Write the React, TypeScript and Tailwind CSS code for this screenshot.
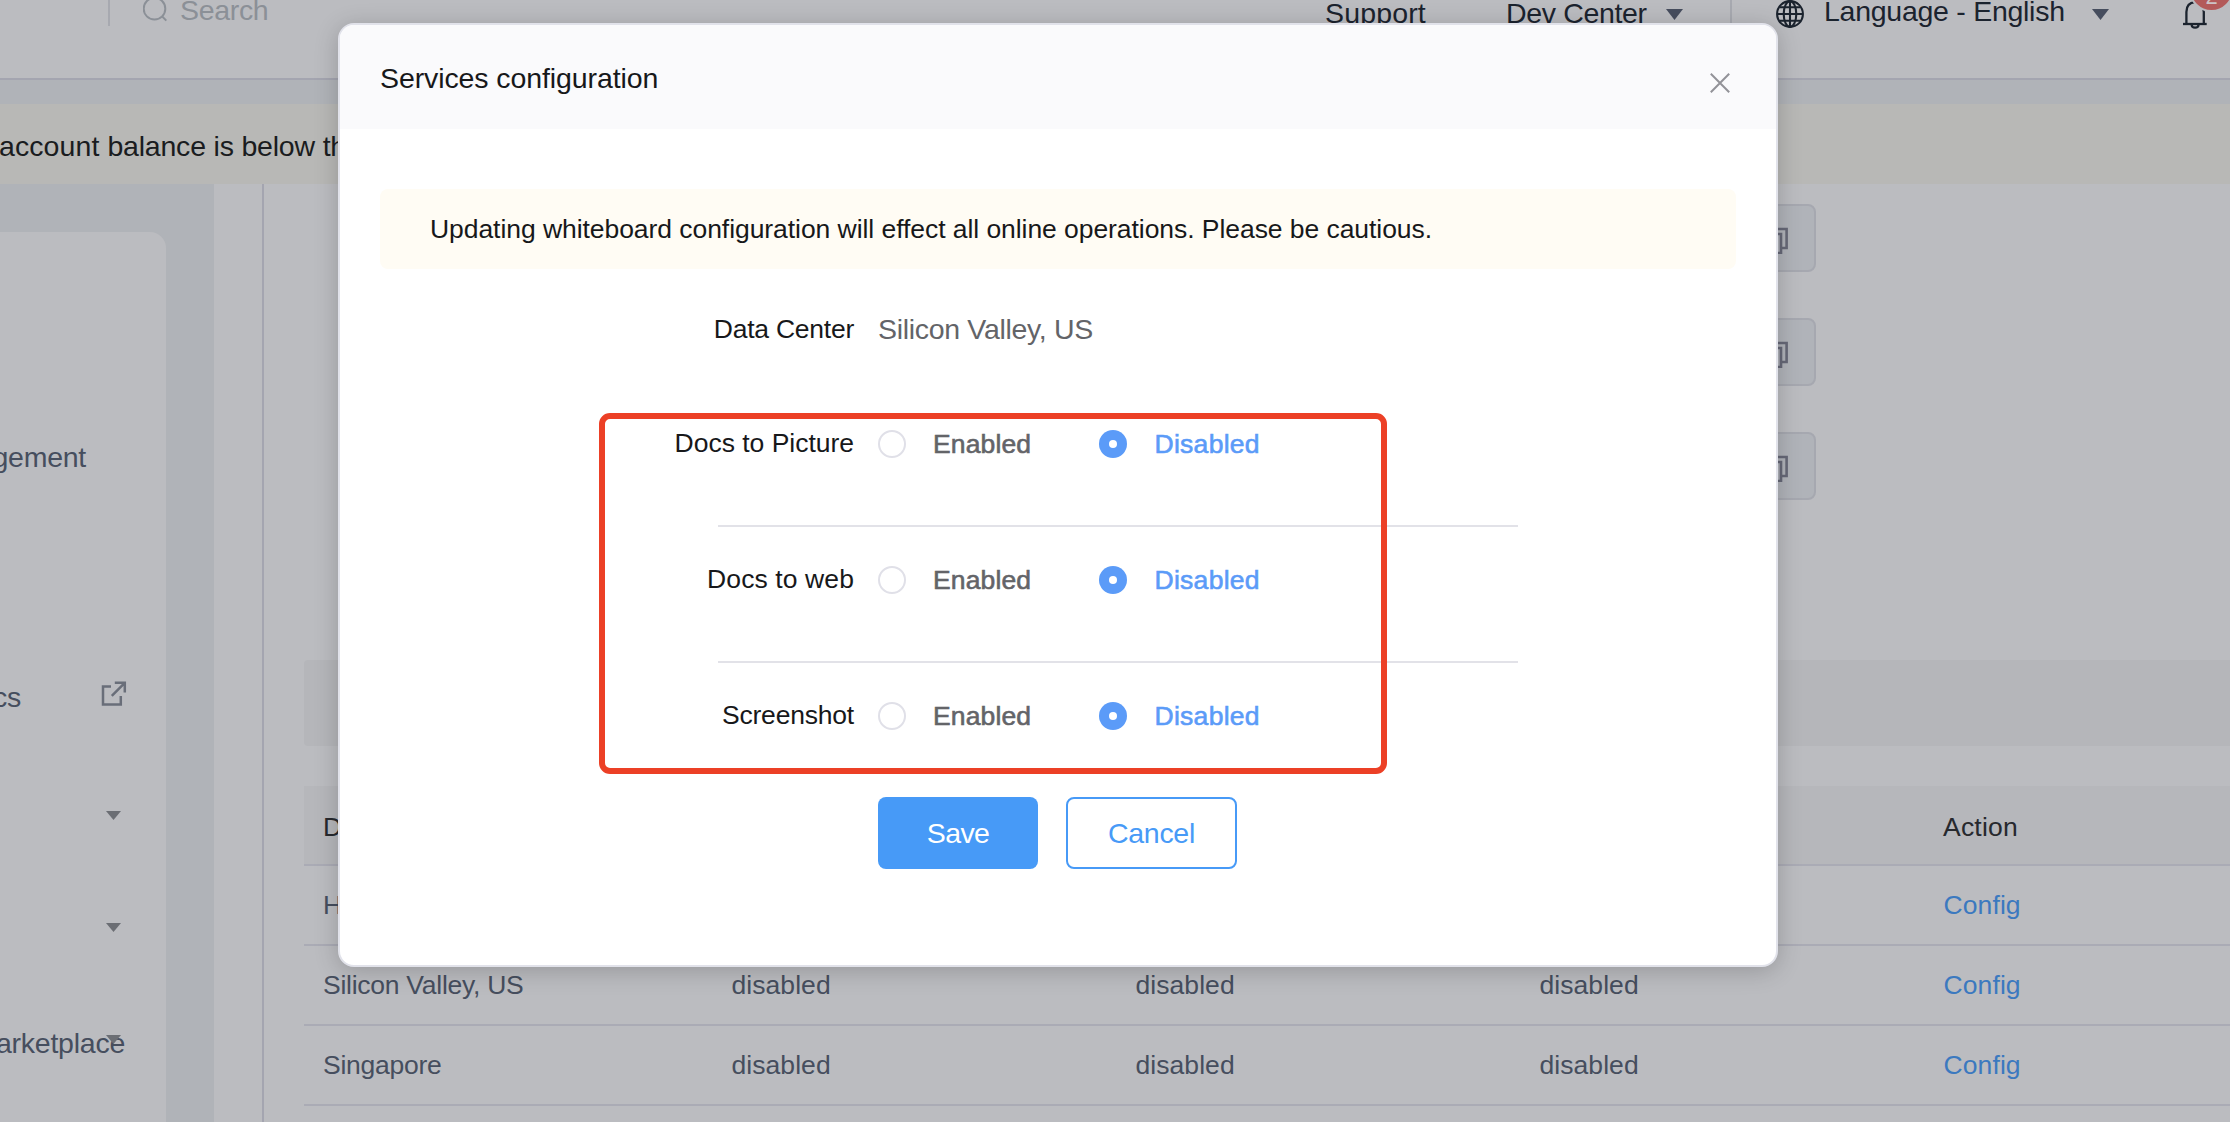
import type { ReactNode } from 'react';

function Caret({ className }: { className: string }) {
  return (
    <svg className={className} viewBox="0 0 16 10" preserveAspectRatio="none" fill="currentColor">
      <path d="M0 0H16L8 10Z" />
    </svg>
  );
}

function SearchIcon() {
  return (
    <svg className="h-[22px] w-[37px]" viewBox="143 0 37 22" fill="none" stroke="#8b9097" strokeWidth="2">
      <circle cx="154.5" cy="8.7" r="10.8" />
      <path d="M162 16.3L166.3 20.6" />
    </svg>
  );
}

function GlobeIcon() {
  return (
    <svg className="h-[28px] w-[47px]" viewBox="0 0 47 28" fill="none" stroke="#1b232e" strokeWidth="2.1">
      <circle cx="14" cy="14" r="12.9" />
      <ellipse cx="14" cy="14" rx="6.3" ry="12.9" />
      <path d="M14 1V27M1 14H27M3.5 7.3H24.5M3.5 20.7H24.5" />
    </svg>
  );
}

function Bell() {
  return (
    <div className="relative h-[30px] w-[47px] shrink-0">
      <svg className="h-[30px] w-[26px]" viewBox="0 0 26 30" fill="none" stroke="#1b232e" strokeWidth="2.3">
        <path d="M3.4 24V12C3.4 6 6.5 2.6 12 2.2C17.5 2.6 20.8 6 20.8 12V24" />
        <path d="M0 24H23.7" />
        <path d="M8.7 25C8.9 28.6 15.3 28.6 15.5 25" />
      </svg>
      <div className="absolute -top-[33px] left-[6px] flex h-[45px] w-[45px] items-end justify-center rounded-full border-2 border-[#bbbcc0] bg-[#b35a5a] text-[22px] leading-[26px] text-[#cdc3c6]">
        2
      </div>
    </div>
  );
}

function ExternalIcon() {
  return (
    <svg className="h-[26px] w-[26px]" viewBox="0 0 26 26" fill="none" stroke="#696e79" strokeWidth="2.5">
      <path d="M10 5.6H2V23.4H19.8V15" />
      <path d="M13.8 1.8H23.8V11.5M23.5 2.1L10.8 14.8" />
    </svg>
  );
}

function CopyButton() {
  return (
    <div className="h-[68px] w-[68px] rounded-lg border-2 border-[#a6a8b0] bg-[#b0b3b9] pt-[20px] pl-[12px]">
      <svg className="h-[28px] w-[26px]" viewBox="0 0 26 28" fill="none" stroke="#666877" strokeWidth="2.6">
        <path d="M7 7V3H24.6V22H19.5" />
        <path d="M2 8H19V27H2Z" />
      </svg>
    </div>
  );
}

function Header() {
  return (
    <header className="flex h-20 items-start border-b-2 border-[#a4a5b0] text-[28.5px] whitespace-nowrap text-[#1b232e]">
      <div className="mr-[33px] ml-[108px] h-[26px] w-[2px] bg-[#a7a9b0]" />
      <SearchIcon />
      <div className="flex-1 leading-[20px] tracking-[-0.33px] text-[#8b9097]">Search</div>
      <div className="w-[181px] leading-[27px] tracking-[0.16px]">Support</div>
      <div className="w-[160px] leading-[27px] tracking-[-0.34px]">Dev Center</div>
      <Caret className="mt-[9px] mr-[47px] h-[11px] w-[17px] text-[#464d5e]" />
      <div className="mr-[44px] h-[26px] w-[2px] bg-[#a7a9b0]" />
      <GlobeIcon />
      <div className="w-[269px] pl-px leading-[22px] tracking-[-0.27px]">Language - English</div>
      <Caret className="mt-[9px] mr-[74px] h-[11px] w-[17px] text-[#464d5e]" />
      <Bell />
    </header>
  );
}

function Sidebar() {
  return (
    <aside className="w-[214px] shrink-0 bg-[#b0b3b8] pt-12">
      <div className="flex h-full w-[166px] flex-col overflow-hidden rounded-tr-2xl bg-[#bbbcc0] text-[28.5px] leading-8 tracking-[-0.25px] text-[#464e5e]">
        <div className="mt-[209px] flex h-8 w-[86px] justify-end">gement</div>
        <div className="mt-[208px] flex h-8">
          <div className="flex w-[21px] justify-end">cs</div>
          <div className="ml-[80px]">
            <ExternalIcon />
          </div>
        </div>
        <div className="mt-[86px] flex h-8 items-center pl-[106px] text-[#6b6e74]">
          <Caret className="h-[9px] w-[15px]" />
        </div>
        <div className="mt-20 flex h-8 items-center pl-[106px] text-[#6b6e74]">
          <Caret className="h-[9px] w-[15px]" />
        </div>
        <div className="relative mt-20 h-8">
          <div className="flex w-[125px] justify-end pt-[4px]">arketplace</div>
          <Caret className="absolute top-[12px] left-[106px] h-[9px] w-[15px] text-[#6b6e74]" />
        </div>
      </div>
    </aside>
  );
}

const rows = [
  { name: 'Hangzhou, CN', value: '' },
  { name: 'Silicon Valley, US', value: 'disabled' },
  { name: 'Singapore', value: 'disabled' },
];

function Main() {
  return (
    <main className="ml-12 flex-1 border-l-2 border-[#a4a5b0] pt-5 pl-10">
      <div className="ml-[1444px] flex flex-col gap-[46px]">
        <CopyButton />
        <CopyButton />
        <CopyButton />
      </div>
      <div className="mt-[160px] h-[86px] rounded-l bg-[#b5b6ba]" />
      <div className="mt-10 text-[26.5px] whitespace-nowrap text-[#464e5e]">
        <div className="grid h-20 grid-cols-[408px_404px_404px_404px_1fr] items-center border-b-2 border-[#aaabb5] bg-[#b6b7bb] pt-1.5 text-[#27292e]">
          <div className="pl-[19px] tracking-[-0.25px]">Data Center</div>
          <div />
          <div />
          <div />
          <div className="pl-[19px] tracking-[0.2px]">Action</div>
        </div>
        {rows.map((row) => (
          <div
            key={row.name}
            className="grid h-20 grid-cols-[408px_404px_404px_404px_1fr] items-center border-b-2 border-[#aaabb5] pt-0.5 tracking-[0.06px]"
          >
            <div className="pl-[19px] tracking-[-0.26px]">{row.name}</div>
            <div className="pl-[19.5px]">{row.value}</div>
            <div className="pl-[19.5px]">{row.value}</div>
            <div className="pl-[19.5px]">{row.value}</div>
            <div className="pl-[19.5px] tracking-[0.1px] text-[#3b79bf]">Config</div>
          </div>
        ))}
      </div>
    </main>
  );
}

function Field({ label, children }: { label: ReactNode; children: ReactNode }) {
  return (
    <div className="flex h-10 items-center">
      <div className="w-[514px] text-right text-[26.5px] text-[#17181a]">{label}</div>
      {children}
    </div>
  );
}

function Choice() {
  return (
    <div className="ml-6 flex items-center text-[26.5px] font-medium">
      <div className="flex w-[221px] items-center">
        <span className="h-7 w-7 rounded-full border-2 border-[#e0e0e8] bg-white" />
        <span className="ml-[27px] pt-0.5 tracking-[0.14px] text-[#636468] [-webkit-text-stroke:0.6px_#636468]">
          Enabled
        </span>
      </div>
      <span className="flex h-7 w-7 items-center justify-center rounded-full bg-[#5b9bf8]">
        <span className="h-2 w-2 rounded-full bg-white" />
      </span>
      <span className="ml-[27.5px] pt-0.5 tracking-[0.28px] text-[#5b9bf8] [-webkit-text-stroke:0.6px_#5b9bf8]">
        Disabled
      </span>
    </div>
  );
}

function Modal() {
  return (
    <div className="absolute top-[23px] left-[338px] h-[944px] w-[1440px] rounded-2xl border-2 border-[#e1e2ea] bg-white shadow-[0_4px_24px_rgba(0,0,0,0.2)]">
      <div className="flex h-[104px] items-center justify-between rounded-t-[14px] bg-[#fafafc] pr-[46px] pl-[40px]">
        <h2 className="pt-0.5 text-[28.5px] tracking-[-0.1px] text-[#17181a]">Services configuration</h2>
        <svg className="mt-3 h-5 w-5" viewBox="0 0 20 20" fill="none" stroke="#929298" strokeWidth="2">
          <path d="M0.8 0.8L19.2 19.2M19.2 0.8L0.8 19.2" />
        </svg>
      </div>
      <div className="mx-10 mt-[60px] flex h-20 items-center rounded-lg bg-[#fffcf4] pt-0.5 pl-[50px] text-[26.5px] tracking-[-0.058px] text-[#17181a]">
        Updating whiteboard configuration will effect all online operations. Please be cautious.
      </div>
      <div className="mt-10">
        <Field label={<span className="block pt-0.5 tracking-[-0.25px]">Data Center</span>}>
          <span className="ml-6 text-[28.5px] tracking-[-0.32px] text-[#636468]">Silicon Valley, US</span>
        </Field>
      </div>
      <div className="mt-[75px]">
        <Field label={<span className="tracking-[-0.02px]">Docs to Picture</span>}>
          <Choice />
        </Field>
        <div className="mt-[61px] mb-[33px] ml-[378px] h-[2px] w-[800px] bg-[#e2e2e8]" />
        <Field label={<span className="tracking-[0.1px]">Docs to web</span>}>
          <Choice />
        </Field>
        <div className="mt-[61px] mb-[33px] ml-[378px] h-[2px] w-[800px] bg-[#e2e2e8]" />
        <Field label={<span className="tracking-[-0.2px]">Screenshot</span>}>
          <Choice />
        </Field>
      </div>
      <div className="mt-[61px] ml-[538px] flex gap-7 text-[28.5px]">
        <button className="h-[72px] w-[160px] rounded-lg bg-[#479af7] tracking-[-0.6px] text-white">Save</button>
        <button className="h-[72px] w-[171px] rounded-lg border-2 border-[#479af7] bg-white tracking-[-0.29px] text-[#479af7]">
          Cancel
        </button>
      </div>
      <div className="absolute top-[388px] left-[258.5px] h-[361px] w-[788.5px] rounded-[11px] border-6 border-[#ec4026]" />
    </div>
  );
}

export default function App() {
  return (
    <div className="relative flex h-[1122px] w-[2230px] flex-col overflow-hidden bg-[#bbbcc0] font-['Liberation_Sans',Arial,sans-serif]">
      <Header />
      <div className="h-6 shrink-0 bg-[#b0b3b8]" />
      <div className="flex h-20 shrink-0 items-center bg-[#b8b8b6] pt-1 text-[28.5px] tracking-[-0.2px] text-[#1a1c20]">
        <span className="-ml-px tracking-[0.08px]">account&nbsp;</span>
        <span>balance is below the</span>
      </div>
      <div className="flex min-h-0 flex-1">
        <Sidebar />
        <Main />
      </div>
      <Modal />
    </div>
  );
}
